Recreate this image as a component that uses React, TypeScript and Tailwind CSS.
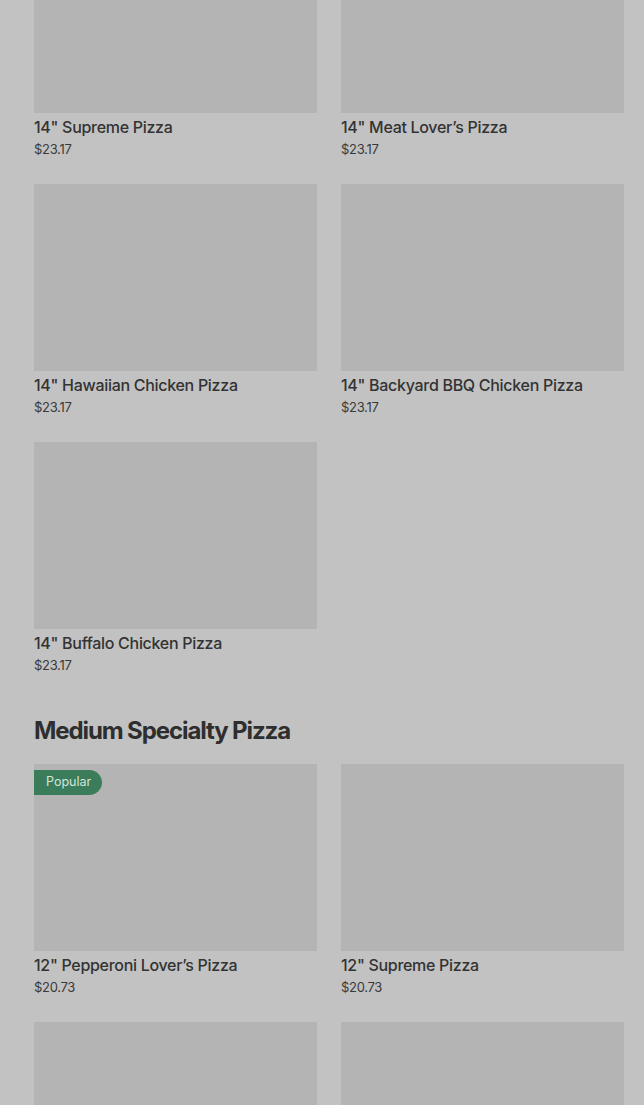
import React from "react";

interface Item {
  name: string;
  price: string;
  popular?: boolean;
}

const large: Item[] = [
  { name: '14" Supreme Pizza', price: "$23.17" },
  { name: '14" Meat Lover\u2019s Pizza', price: "$23.17" },
  { name: '14" Hawaiian Chicken Pizza', price: "$23.17" },
  { name: '14" Backyard BBQ Chicken Pizza', price: "$23.17" },
  { name: '14" Buffalo Chicken Pizza', price: "$23.17" },
];

const medium: Item[] = [
  { name: '12" Pepperoni Lover\u2019s Pizza', price: "$20.73", popular: true },
  { name: '12" Supreme Pizza', price: "$20.73" },
];

// the next row is only visible as the top of its photos
const Card: React.FC<{ item: Item }> = ({ item }) => (
  <div className="flex flex-col">
    <div className="relative h-[187px] bg-[#b4b4b4]">
      {item.popular && (
        <span className="absolute left-0 top-[6px] h-[25px] pl-3 pr-[11px] flex items-center rounded-r-full bg-[#3b7d5b] text-[#d3e4da] text-[12.5px] leading-none">
          Popular
        </span>
      )}
    </div>
    <div className="mt-[4px] text-[16px] leading-[20px] font-medium text-[#333333] tracking-[-0.3px]">
      {item.name}
    </div>
    <div className="mt-[3px] text-[13px] leading-[18px] text-[#3a3a3a] tracking-[-0.3px]">
      {item.price}
    </div>
  </div>
);

export default function App() {
  return (
    <div
      className="h-screen bg-[#c2c2c2] overflow-hidden"
      style={{ fontFamily: "Inter, 'Noto Sans', 'Liberation Sans', sans-serif" }}
    >
      <div className="pl-[34px] pr-[20px] -mt-[74px]">
        <div className="grid grid-cols-2 gap-x-[24px] gap-y-[26px]">
          {large.map((it) => (
            <Card key={it.name} item={it} />
          ))}
        </div>
        <h2 className="mt-[41px] mb-[17px] text-[24px] leading-[32px] font-bold text-[#2e2e2e] tracking-[-1.1px]">
          Medium Specialty Pizza
        </h2>
        <div className="grid grid-cols-2 gap-x-[24px] gap-y-[26px]">
          {medium.map((it) => (
            <Card key={it.name} item={it} />
          ))}
          <div className="h-[187px] bg-[#b4b4b4]" />
          <div className="h-[187px] bg-[#b4b4b4]" />
        </div>
      </div>
    </div>
  );
}
